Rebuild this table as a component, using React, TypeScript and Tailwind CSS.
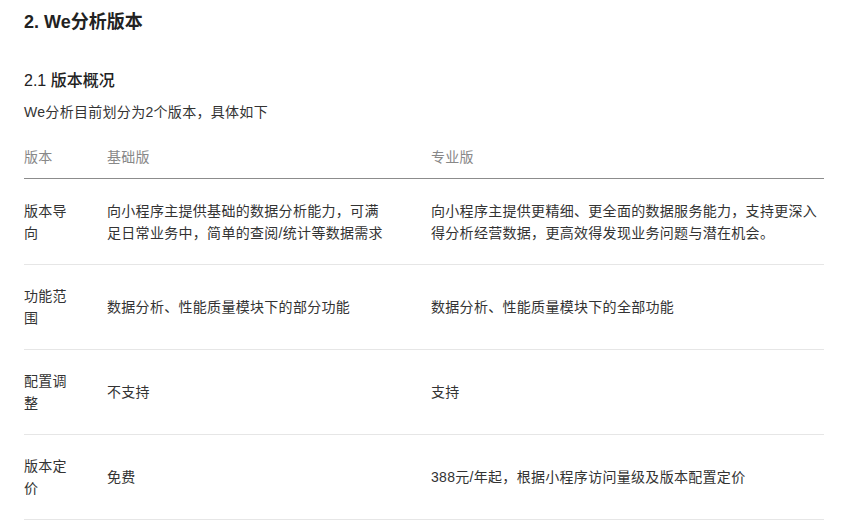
import React from "react";

const rows: [string, string, string][] = [
  [
    "版本导向",
    "向小程序主提供基础的数据分析能力，可满足日常业务中，简单的查阅/统计等数据需求",
    "向小程序主提供更精细、更全面的数据服务能力，支持更深入得分析经营数据，更高效得发现业务问题与潜在机会。",
  ],
  ["功能范围", "数据分析、性能质量模块下的部分功能", "数据分析、性能质量模块下的全部功能"],
  ["配置调整", "不支持", "支持"],
  ["版本定价", "免费", "388元/年起，根据小程序访问量级及版本配置定价"],
];

export default function App() {
  return (
    <div
      className="min-h-screen bg-white px-6 text-[#333]"
      style={{ fontFamily: '"Liberation Sans", "Noto Sans CJK SC", sans-serif' }}
    >
      <h2 className="pt-[9px] text-[18px] font-semibold leading-[26px] text-[#222]">2. We分析版本</h2>
      <h3 className="mt-[35px] text-[16px] font-medium leading-[22px] text-[#222]">2.1 版本概况</h3>
      <p className="mt-[9px] text-[14px] leading-[22px] tracking-[0.3px]">We分析目前划分为2个版本，具体如下</p>

      <table className="mt-[23px] w-[800px] table-fixed border-collapse text-[14px] leading-[22px] tracking-[0.3px]">
        <colgroup>
          <col className="w-[83px]" />
          <col className="w-[324px]" />
          <col className="w-[393px]" />
        </colgroup>
        <thead>
          <tr className="border-b border-[#8c8c8c] text-left text-[#888]">
            <th className="pb-[10px] pr-[30px] font-normal">版本</th>
            <th className="pb-[10px] pr-[44px] font-normal">基础版</th>
            <th className="pb-[10px] pr-[2px] font-normal">专业版</th>
          </tr>
        </thead>
        <tbody>
          {rows.map((r, i) => (
            <tr
              key={r[0]}
              className={`${i === 0 ? "h-[86px]" : "h-[85px]"} border-b border-[#e6e6e6] align-middle`}
            >
              <td className="pr-[30px]">{r[0]}</td>
              <td className="pr-[44px]">{r[1]}</td>
              <td className="pr-[2px]">{r[2]}</td>
            </tr>
          ))}
        </tbody>
      </table>
    </div>
  );
}
